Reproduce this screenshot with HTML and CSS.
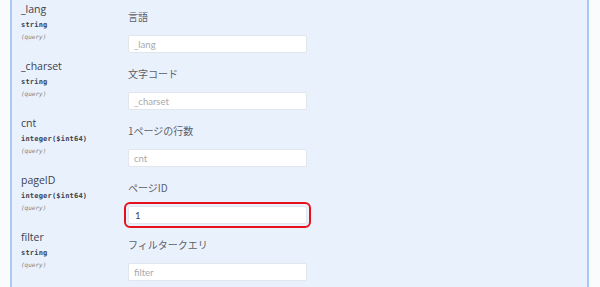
FILE: index.html
```html
<!DOCTYPE html>
<html lang="ja">
<head>
<meta charset="utf-8">
<link rel="stylesheet" href="styles.css">
</head>
<body>
<div class="page">
  <div class="panel">
    <div class="row">
      <div class="name"><div class="pname">_lang</div><div class="ptype">string</div><div class="pin">(query)</div></div>
      <div class="desc"><div class="label">言語</div><input class="field" placeholder="_lang"></div>
    </div>
    <div class="row">
      <div class="name"><div class="pname">_charset</div><div class="ptype">string</div><div class="pin">(query)</div></div>
      <div class="desc"><div class="label">文字コード</div><input class="field" placeholder="_charset"></div>
    </div>
    <div class="row">
      <div class="name"><div class="pname">cnt</div><div class="ptype">integer($int64)</div><div class="pin">(query)</div></div>
      <div class="desc"><div class="label">1ページの行数</div><input class="field" placeholder="cnt"></div>
    </div>
    <div class="row">
      <div class="name"><div class="pname">pageID</div><div class="ptype">integer($int64)</div><div class="pin">(query)</div></div>
      <div class="desc"><div class="label">ページID</div><input class="field marked" value="1"></div>
    </div>
    <div class="row">
      <div class="name"><div class="pname">filter</div><div class="ptype">string</div><div class="pin">(query)</div></div>
      <div class="desc"><div class="label">フィルタークエリ</div><input class="field" placeholder="filter"></div>
    </div>
  </div>
</div>
</body>
</html>
```
FILE: styles.css
```css
html, body {
  margin: 0;
  padding: 0;
  background: #fafbfd;
  overflow: hidden;
}
.page {
  width: 600px;
  height: 287px;
  padding: 0 11px 0 10px;
  box-sizing: border-box;
}
.panel {
  height: 100%;
  background: #e9f1fc;
  border-left: 2px solid #a9cbf3;
  border-right: 2px solid #a9cbf3;
  padding-left: 9px;
  box-sizing: border-box;
}
.row {
  height: 57px;
  display: grid;
  grid-template-columns: 107px 1fr;
}
.name {
  padding-top: 2px;
}
.pname {
  font-family: "Open Sans", "Noto Sans", sans-serif;
  font-size: 10.5px;
  line-height: 14px;
  color: #3b4151;
}
.ptype {
  margin-top: 4px;
  font-family: "DejaVu Sans Mono", monospace;
  font-weight: bold;
  font-size: 7px;
  letter-spacing: 0.2px;
  line-height: 10px;
  color: #3b4151;
}
.pin {
  margin-top: 2px;
  font-family: "DejaVu Sans Mono", monospace;
  font-style: italic;
  font-size: 6px;
  line-height: 10px;
  color: #808080;
}
.desc {
  padding-top: 10px;
}
.label {
  font-family: "Noto Sans CJK JP", "Noto Sans", sans-serif;
  font-size: 10px;
  line-height: 14px;
  color: #5c6069;
}
.field {
  display: block;
  margin-top: 11px;
  width: 179px;
  height: 18px;
  box-sizing: border-box;
  border: 1px solid #e1e6ec;
  border-radius: 2px;
  background: #fff;
  padding: 0 0 0 5px;
  font-family: "Lato", "Open Sans", sans-serif;
  font-size: 9.5px;
  color: #3b4151;
  outline: none;
}
.field::placeholder {
  color: #a7a9ad;
}
.field.marked {
  padding-left: 6px;
  outline: 2.5px solid #e8101a;
  outline-offset: 2.5px;
  border-radius: 2px;
}
```
